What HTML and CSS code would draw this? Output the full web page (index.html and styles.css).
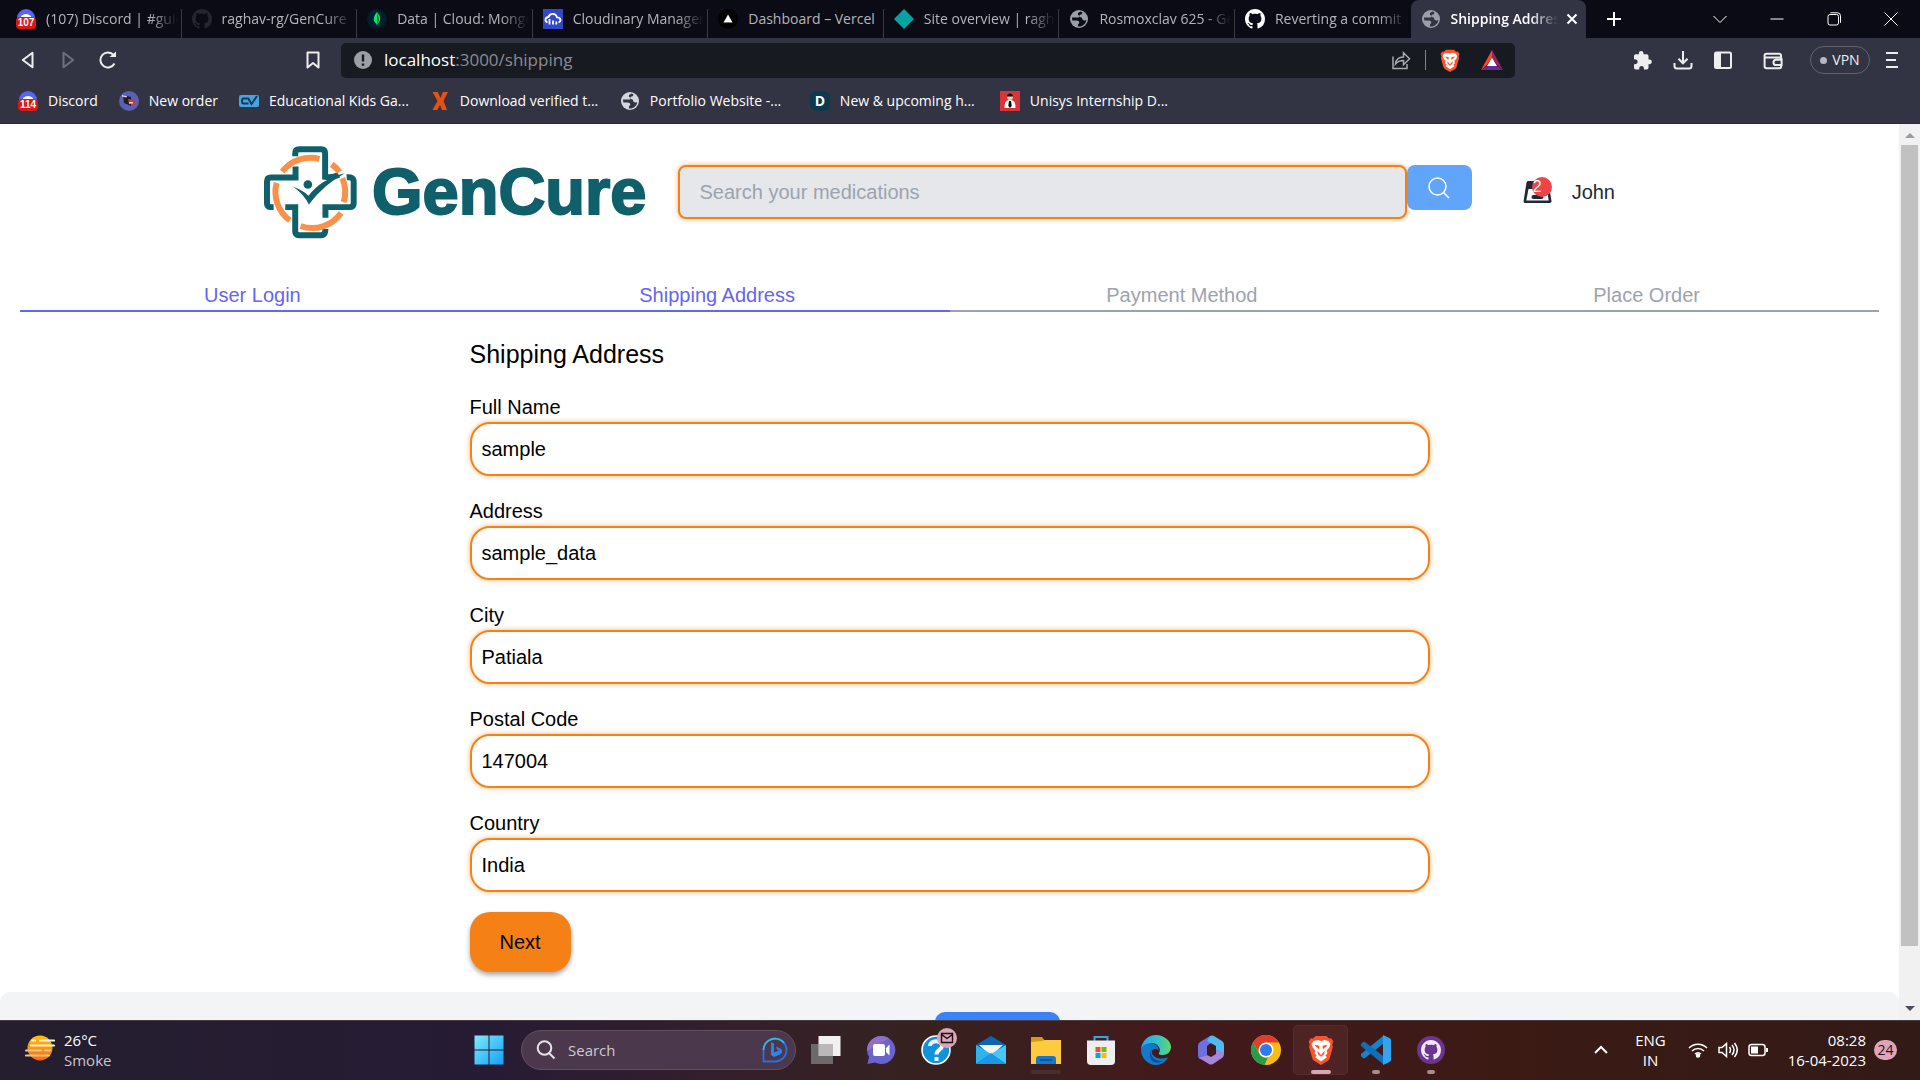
FILE: index.html
```html
<!DOCTYPE html>
<html lang="en">
<head>
<meta charset="utf-8">
<title>Shipping Address</title>
<link rel="stylesheet" href="styles.css">
</head>
<body>
<svg class="defs" aria-hidden="true">
  <symbol id="github" viewBox="0 0 16 16"><path fill="currentColor" d="M8 0C3.58 0 0 3.58 0 8c0 3.54 2.29 6.53 5.47 7.59.4.07.55-.17.55-.38 0-.19-.01-.82-.01-1.49-2.01.37-2.53-.49-2.69-.94-.09-.23-.48-.94-.82-1.13-.28-.15-.68-.52-.01-.53.63-.01 1.08.58 1.23.82.72 1.21 1.87.87 2.33.66.07-.52.28-.87.51-1.07-1.78-.2-3.64-.89-3.64-3.95 0-.87.31-1.59.82-2.15-.08-.2-.36-1.02.08-2.12 0 0 .67-.21 2.2.82.64-.18 1.32-.27 2-.27s1.36.09 2 .27c1.53-1.04 2.2-.82 2.2-.82.44 1.1.16 1.92.08 2.12.51.56.82 1.27.82 2.15 0 3.07-1.87 3.75-3.65 3.95.29.25.54.73.54 1.48 0 1.07-.01 1.93-.01 2.2 0 .21.15.46.55.38A8.01 8.01 0 0 0 16 8c0-4.42-3.58-8-8-8z"/></symbol>
  <symbol id="globe" viewBox="0 0 20 20"><circle cx="10" cy="10" r="9" fill="currentColor"/><path fill="var(--hole)" d="M11.5 2.6c-1 1-2.700 1-2.700 2.400s1.700 1 1.700 2.400-2 1.200-3.400 1.200H3c0 1.200.1 2 .4 2.800h4.100c1.600 0 2.800.9 2.800 2.200s-1.300 1-1.300 2.300v1.500c4.300.5 8-2.700 8.300-6.500-1.300 1-3.100.9-3.900-.4-.5-.9-.1-1.700-1-2-1.100-.4-2.200-.8-1.900-2s2.200-.7 2.700-1.900c.2-.6.1-1-.1-1.300z"/></symbol>
  <symbol id="brave" viewBox="0 0 24 28"><path fill="#fb542b" d="M7 1h10l2.500 2.300 2-.2 2 3-1 3 .6 2-3 10.500c-.4 1.400-1.200 2.200-2.300 3L12 28l-5.800-3.400c-1.100-.8-1.900-1.600-2.300-3L.9 11.100l.6-2-1-3 2-3 2 .2z"/><path fill="#fff" d="M12 5.500l3-.8 4 .8 1.800 3-1 3-2.500 3.200.7 2.500-2 2 1.500 1.500-5.500 4-5.500-4L8 19.200l-2-2 .7-2.500-2.500-3.200-1-3L5 5.500l4-.8z"/><path fill="#fb542b" d="M6 9l4.500 1-.2 3.200L7.200 11zM18 9l-4.500 1 .2 3.200 3.100-2.200zM8.500 15l2 1.800L12 19l1.500-2.200 2-1.800-.6 3-2.900 2.300L9.100 18z"/></symbol>
  <symbol id="discord" viewBox="0 0 20 20"><circle cx="10" cy="9" r="9" fill="#5865f2"/><path fill="#fff" d="M5 7q5-4 10 0v3H5z"/><rect y="8" width="20" height="12" rx="4" fill="#dd1717"/></symbol>
</svg>

<header class="chrome">
  <div class="tabstrip">
    <nav class="tabs" aria-label="Open tabs">
      <a class="tab" href="#"><span class="favicon badged"><svg><use href="#discord"/></svg><b>107</b></span><span class="tab-title">(107) Discord | #guides</span></a>
      <a class="tab" href="#"><svg class="favicon dark"><use href="#github"/></svg><span class="tab-title">raghav-rg/GenCure</span></a>
      <a class="tab" href="#"><svg class="favicon" viewBox="0 0 20 20"><circle cx="10" cy="10" r="10" fill="#001e2b"/><path fill="#00ed64" d="M10 3c-2 2.500-3.200 4.500-3.200 7 0 2.300 1.300 4 2.800 5l.4 2 .4-2c1.500-1 2.800-2.700 2.800-5 0-2.500-1.200-4.500-3.200-7z"/><path fill="#00684a" d="M10 4v13l.4-2c3-4 .8-8-.4-11z"/></svg><span class="tab-title">Data | Cloud: MongoDB</span></a>
      <a class="tab" href="#"><svg class="favicon" viewBox="0 0 20 20"><rect width="20" height="20" fill="#3448c5"/><path fill="none" stroke="#fff" stroke-width="1.800" d="M4.500 13.500c-3.500-1.500-2-5.500 1-5.500 1.500-4.500 7.500-4 8.500.3 4 0 4.500 4 1.500 5.200M6.500 10v5.500M10 11.500v4M13.300 12.500v3"/></svg><span class="tab-title">Cloudinary Management</span></a>
      <a class="tab" href="#"><svg class="favicon" viewBox="0 0 20 20"><circle cx="10" cy="10" r="10"/><path fill="#fff" d="M10 5.500l4.500 8h-9z"/></svg><span class="tab-title whole">Dashboard – Vercel</span></a>
      <a class="tab" href="#"><svg class="favicon" viewBox="0 0 20 20"><path fill="#06a3a3" d="M10 0l10 10-10 10L0 10z"/></svg><span class="tab-title">Site overview | raghav</span></a>
      <a class="tab" href="#"><svg class="favicon globe"><use href="#globe"/></svg><span class="tab-title">Rosmoxclav 625 - GenCure</span></a>
      <a class="tab" href="#"><svg class="favicon white"><use href="#github"/></svg><span class="tab-title">Reverting a commit in</span></a>
      <div class="tab active"><svg class="favicon globe"><use href="#globe"/></svg><span class="tab-title">Shipping Address</span><button class="tab-close" aria-label="Close tab"><svg viewBox="0 0 12 12"><path d="M1.500 1.500l9 9M10.500 1.500l-9 9"/></svg></button></div>
    </nav>
    <button class="new-tab" aria-label="New tab"><svg viewBox="0 0 16 16"><path d="M8 1v14M1 8h14"/></svg></button>
    <div class="window-buttons">
      <button aria-label="Search tabs"><svg viewBox="0 0 14 14"><path d="M.5 4L7 10.500 13.500 4"/></svg></button>
      <button aria-label="Minimize"><svg viewBox="0 0 14 14"><path d="M.5 7h13"/></svg></button>
      <button aria-label="Restore"><svg viewBox="0 0 14 14"><rect x="1" y="2.500" width="10.500" height="10.500" rx="2"/><path d="M3.500.800h7a3 3 0 0 1 3 3v7"/></svg></button>
      <button aria-label="Close"><svg viewBox="0 0 14 14"><path d="M.5.500l13 13M13.500.500l-13 13"/></svg></button>
    </div>
  </div>

  <div class="toolbar">
    <div class="nav-buttons">
      <button aria-label="Back"><svg viewBox="0 0 20 20"><path d="M14.500 2.800v14.400L4.800 10z"/></svg></button>
      <button class="disabled" aria-label="Forward" disabled><svg viewBox="0 0 20 20"><path d="M5.500 2.800v14.400l9.700-7.200z"/></svg></button>
      <button aria-label="Reload"><svg viewBox="0 0 20 20"><path d="M16.500 13.500a7.500 7.500 0 1 1-.8-8.300"/><path class="solid" d="M11.500 7h6.500V1.500z"/></svg></button>
    </div>
    <button class="bookmark-page" aria-label="Bookmark this page"><svg viewBox="0 0 20 20"><path d="M4.500 2.500h11v15L10 13l-5.500 4.500z"/></svg></button>
    <div class="address">
      <svg class="info" viewBox="0 0 18 18"><circle cx="9" cy="9" r="9" fill="#9aa0a6"/><path stroke="#181a21" stroke-width="2.400" d="M9 3.500v7M9 12.500v2.300"/></svg>
      <span class="url"><strong>localhost</strong>:3000/shipping</span>
      <div class="address-actions">
        <svg class="share" viewBox="0 0 20 20"><path d="M2 6.500V18.500h14V14M4.500 14c.5-4.500 3.500-7 8-7V2.800l6 6-6 6V10.500c-3.500 0-6 1-8 3.500z"/></svg>
        <i class="divider"></i>
        <svg class="lion"><use href="#brave"/></svg>
        <svg class="bat" viewBox="0 0 22 20"><path fill="#ff4724" d="M11 0v7L6 15l-6 5z"/><path fill="#9e1f63" d="M11 0l11 20-6-5-5-8z"/><path fill="#662d91" d="M0 20l6-4h10l6 4z"/><path fill="#fff" d="M11 7.500l5 8.500H6z"/></svg>
      </div>
    </div>
    <div class="tools">
      <button aria-label="Extensions"><svg viewBox="0 0 20 20"><path class="fill" d="M16.500 9.500H15.500V6a1.800 1.800 0 0 0-1.800-1.800H10.500V3.200a2.300 2.300 0 0 0-4.600 0v1H2.800A1.800 1.800 0 0 0 1 6v3.200h1.200a2.500 2.500 0 0 1 0 5H1v3.500A1.800 1.800 0 0 0 2.800 19.500h3.400v-1.200a2.300 2.300 0 0 1 4.700 0v1.200h2.800a1.800 1.800 0 0 0 1.800-1.800v-3.500h1a2.350 2.350 0 0 0 0-4.700z"/></svg></button>
      <button aria-label="Downloads"><svg viewBox="0 0 20 20"><path d="M10 1v12M5.500 8.800L10 13.300l4.500-4.500M1.500 13v3c0 1.500 1 2.500 2.500 2.500h12c1.500 0 2.500-1 2.500-2.500v-3"/></svg></button>
      <button aria-label="Sidebar"><svg viewBox="0 0 20 20"><rect x="2" y="2.500" width="16" height="15.500" rx="1.500"/><path class="fill" d="M2 2.500h6v15.500H2z"/></svg></button>
      <button class="wallet" aria-label="Wallet"><svg viewBox="0 0 20 20"><path d="M18 7V5.500c0-1-.8-1.700-1.800-1.700H3.300A1.600 1.600 0 0 0 1.600 5.500v10.700c0 1 .9 2 2 2h12.600c1.200 0 2-.8 2-2V15M1.600 6.300c0 .7.700 1.200 1.700 1.200h13.500a1.800 1.800 0 0 1 1.800 1.800V15h-5.500a2.600 2.600 0 0 1 0-5.200h5"/></svg></button>
      <button class="vpn"><i></i>VPN</button>
      <button class="menu" aria-label="Menu"><svg viewBox="0 0 16 20"><path d="M2 3h12M2 10h10M2 17h12"/></svg></button>
    </div>
  </div>

  <nav class="bookmarks" aria-label="Bookmarks">
    <a href="#"><span class="favicon badged"><svg><use href="#discord"/></svg><b>114</b></span>Discord</a>
    <a href="#"><svg class="favicon" viewBox="0 0 20 20"><circle cx="10" cy="10" r="10" fill="#5860b8"/><path fill="#1d1d2b" d="M4 4l8 2v9l-7-3z"/><path fill="#c43b45" d="M9 8l8 1-1 5-6-1z"/><path fill="#e8d8c8" d="M3 4l5 1-.5 1.500L3 5.500zM10 11h4v1.500h-4z"/></svg>New order</a>
    <a class="long" href="#"><svg class="favicon" viewBox="0 0 20 20"><rect y="4" width="20" height="12" rx="2" fill="#45a5e0"/><path fill="none" stroke="#123a5c" stroke-width="2" d="M9.500 7.500H4.500C2.500 7.500 2.500 12.500 4.500 12.500h5M9 7l3.500 6L18 5"/></svg>Educational Kids Ga...</a>
    <a class="long" href="#"><svg class="favicon" viewBox="0 0 20 20"><path fill="#e8500f" d="M2.500 1h5.300L10.500 7l2.300-6H18l-4.500 9L17 19h-5l-2-5-2.700 5H2.500L7.500 10z"/></svg>Download verified t...</a>
    <a class="long" href="#"><svg class="favicon globe light"><use href="#globe"/></svg>Portfolio Website -...</a>
    <a class="long" href="#"><span class="favicon letter">D</span>New &amp; upcoming h...</a>
    <a class="long" href="#"><svg class="favicon" viewBox="0 0 20 20"><rect width="20" height="20" fill="#da3438"/><path fill="#fff" d="M4.500 17c0-6 1.500-8 5.500-8s5.500 2 5.500 8z"/><circle cx="10" cy="6" r="3" fill="#f5cdb4"/><path d="M7 5.500c0-4 6-4 6 0zM9 10h2l.7 5-1.700 2-1.700-2z"/></svg>Unisys Internship D...</a>
  </nav>
</header>

<div class="viewport">
  <div class="page">
    <header class="site-header">
      <a class="logo" href="#">
        <svg viewBox="43 47 280 278" aria-hidden="true">
          <g fill="none" stroke="#10606b" stroke-width="18">
            <path d="M137 77V68Q137 56 149 56H215Q227 56 227 68V139Q250 142 268 133"/>
            <path d="M292 140Q313 138 313 154V218Q313 230 301 230H228V262"/>
            <path d="M228 296Q228 315 214 315H149Q137 315 137 303V230H107"/>
            <path d="M72 230H64Q52 230 52 218V153Q52 141 64 141H138V108"/>
          </g>
          <g fill="none" stroke="#f9914a" stroke-width="18">
            <path d="M98 123A106 106 0 0 1 210 85"/>
            <path d="M247 101A106 106 0 0 1 270 124"/>
            <path d="M279 143A106 106 0 0 1 283 215"/>
            <path d="M275 248A106 106 0 0 1 153 287"/>
            <path d="M81 157A106 106 0 0 0 121 270"/>
          </g>
          <circle cx="175" cy="162" r="13" fill="#10606b"/>
          <path fill="#10606b" d="M131 169Q158 178 177 196 215 145 287 128 225 160 178 222 163 192 131 169z"/>
        </svg>
        <span>GenCure</span>
      </a>
      <form class="search">
        <input type="text" aria-label="Search" placeholder="Search your medications">
        <button type="button" aria-label="Search"><svg viewBox="0 0 22 22"><circle cx="9.500" cy="9.500" r="8.500"/><path d="M15.500 15.500l5.500 5.500"/></svg></button>
      </form>
      <a class="cart" href="#" aria-label="Cart">
        <svg viewBox="0 0 28 24"><path fill="#1f2937" fill-rule="evenodd" d="M5 1h18c1 0 1.700.6 1.900 1.600L28 21c.2 1.200-.6 2-1.800 2H1.800C.6 23 0 22.200.1 21L3 2.600C3.200 1.600 4 1 5 1zm0 8L2.800 20.500h22.400L23.500 9z"/><rect x="8" y="15" width="12" height="4" rx="2" fill="#1f2937"/></svg>
        <span class="count">2</span>
      </a>
      <a class="user" href="#">John</a>
    </header>

    <ol class="steps">
      <li class="done">User Login</li>
      <li class="done">Shipping Address</li>
      <li>Payment Method</li>
      <li>Place Order</li>
    </ol>

    <form class="shipping">
      <h1>Shipping Address</h1>
      <div class="field"><label for="name">Full Name</label><input id="name" type="text" value="sample"></div>
      <div class="field"><label for="address">Address</label><input id="address" type="text" value="sample_data"></div>
      <div class="field"><label for="city">City</label><input id="city" type="text" value="Patiala"></div>
      <div class="field"><label for="postal">Postal Code</label><input id="postal" type="text" value="147004"></div>
      <div class="field"><label for="country">Country</label><input id="country" type="text" value="India"></div>
      <button class="next" type="button">Next</button>
    </form>

    <footer class="site-footer"><button type="button" aria-label="Back to top"></button></footer>
  </div>
  <div class="scrollbar" aria-hidden="true">
    <i class="arrow up"></i><i class="thumb"></i><i class="arrow down"></i>
  </div>
</div>

<footer class="taskbar">
  <div class="weather">
    <svg viewBox="0 0 30 26"><defs><linearGradient id="sun" x2="0" y2="1"><stop stop-color="#ffc20a"/><stop offset="1" stop-color="#f26a11"/></linearGradient></defs><circle cx="15" cy="13" r="12.500" fill="url(#sun)"/><path stroke="#fff3d6" stroke-width="2.200" stroke-linecap="round" d="M7 5.500h3M15 5.500h14M6 10.500h23"/><path stroke="#e9c294" stroke-width="2.200" stroke-linecap="round" d="M1 15.500h15M20 15.500h5M1 20.500h23"/></svg>
    <p>26°C<br><span>Smoke</span></p>
  </div>
  <nav class="apps" aria-label="Taskbar">
    <button aria-label="Start"><svg viewBox="0 0 30 30"><defs><linearGradient id="win" x2="1" y2="1"><stop stop-color="#7deaff"/><stop offset="1" stop-color="#14a0f5"/></linearGradient></defs><path fill="url(#win)" d="M.5.500h14v14H.5zM15.500.500h14v14h-14zM.5 15.500h14v14H.5zM15.500 15.500h14v14h-14z"/></svg></button>
    <div class="task-search">
      <svg class="lens" viewBox="0 0 20 20"><circle cx="8.500" cy="8" r="6.800"/><path d="M13 13l5.500 5.500"/></svg>
      <input type="text" aria-label="Search the computer" placeholder="Search">
      <svg class="bing" viewBox="0 0 26 26"><path fill="none" stroke="#2b6fe0" stroke-width="1.800" d="M1.500 24.500V13A11.500 11.500 0 1 1 13 24.500z"/><path fill="none" stroke="#36b9d8" stroke-width="1.800" d="M1.500 13A11.500 11.500 0 0 1 22 6"/><path fill="#2a84f0" d="M9 5l3 1.500v9l5-2-2-1-1-3 5 2.500c2 2 1 4.500-1 5.500L12 20l-3-2z"/></svg>
    </div>
    <button aria-label="Task view"><svg viewBox="0 0 30 30"><rect x="7.500" y="1" width="22" height="20" fill="#f1f1f1"/><rect y="9" width="22" height="20" fill="#777" opacity=".85"/><rect x="7.500" y="9" width="14.500" height="12" fill="#b9b9b9"/></svg></button>
    <button aria-label="Chat"><svg viewBox="0 0 30 30"><path fill="#6a62cf" d="M15 1a14 14 0 1 1-6 26.500L1.500 29 3 22A14 14 0 0 1 15 1z"/><path fill="#8f70c4" d="M1 16A14 14 0 0 1 15 1c3 0 6 1 8 2.500z"/><rect x="7" y="9" width="12" height="12" rx="2" fill="#fff"/><path fill="#fff" d="M20 13l3.500-3.500v11L20 17z"/></svg></button>
    <button class="notified" aria-label="Help"><svg viewBox="0 0 30 30"><circle cx="15" cy="15" r="14" fill="#0e93dc" stroke="#fff" stroke-width="1.600"/><path fill="none" stroke="#fff" stroke-width="4" d="M9 11c0-6.500 12-6.500 12 0 0 4-5.500 3.500-5.500 8.500M15.500 22v4"/></svg><svg class="mail-badge" viewBox="0 0 20 20"><circle cx="10" cy="10" r="10" fill="#dea5b9"/><path fill="none" stroke="#111" stroke-width="1.400" d="M4.500 5.500h11v9h-11zM4.500 6.500l5.500 4 5.500-4"/></svg></button>
    <button aria-label="Mail"><svg viewBox="0 0 30 30"><path fill="#0b64b5" d="M15 1l15 9v6H0v-6z"/><path fill="#f4f4f4" d="M3 10h24l-12 11z"/><path fill="#2db4ee" d="M0 10l15 9-15 10z"/><path fill="#47c8f5" d="M30 10v19L15 19z"/><path fill="#1a98e3" d="M0 29l15-11 15 11z"/></svg></button>
    <button class="open-dim" aria-label="File Explorer"><svg viewBox="0 0 30 30"><path fill="#d69a10" d="M0 2h11l3 4v4H0z"/><path fill="#ffca3e" d="M0 7l11-1 3-1h16v24H0z"/><path fill="#1677cf" d="M5 29v-5q0-3 3-3h14q3 0 3 3v5z"/><path stroke="#0d4e92" stroke-width="1.500" d="M9 25h12"/></svg></button>
    <button aria-label="Store"><svg viewBox="0 0 30 30"><path fill="none" stroke="#2da9ec" stroke-width="2" d="M8.500 6V2h13v4"/><path fill="#eee" d="M1 5.500h28V26q0 4-4 4H5q-4 0-4-4z"/><path fill="#f04f25" d="M9.500 12h5v5h-5z"/><path fill="#7fba00" d="M15.500 12h5v5h-5z"/><path fill="#00a4ef" d="M9.500 18h5v5h-5z"/><path fill="#ffb900" d="M15.500 18h5v5h-5z"/></svg></button>
    <button aria-label="Edge"><svg viewBox="0 0 30 30"><defs><linearGradient id="edge" x2="1"><stop stop-color="#2aa5e5"/><stop offset=".55" stop-color="#34c1c8"/><stop offset="1" stop-color="#5fd96b"/></linearGradient></defs><path fill="#1279c9" d="M0 15C0 7 7 6 13 9c3 1 5 4 4.500 6.500C15 12 10 14 11 18c1 5 9 7 16 4.500C25 27 20 30 15 30 7 30 0 23 0 15z"/><path fill="url(#edge)" d="M0 14C1 6 7 0 15 0s15 6 15 12c0 5-4 8-8 8-3 0-5-.5-4-2C21 13 16 8 10 8 5 8 1 11 0 14z"/><path fill="#0c4f96" d="M11 14c-3 7 3 13 11 12-9 5-17-3-11-12z"/></svg></button>
    <button aria-label="Microsoft 365"><svg viewBox="0 0 30 30"><path fill="#6f6fe0" d="M14 1L4 7q-2 1-2 4v9q0 3 2 4l7-4v-9l8-6z"/><path fill="#52b9ee" d="M14 1q2-1 4 0l8 5q2 1 2 4v9l-8-4v-4l-9-5z"/><path fill="#a685dd" d="M28 18q0 4-2 5l-9 6q-2 1-4 0L3 23l8-3 4 2 5-3v-4z"/></svg></button>
    <button aria-label="Chrome"><svg viewBox="0 0 30 30"><circle cx="15" cy="15" r="15" fill="#fbbc12"/><path fill="#e33b2e" d="M2 7.500a15 15 0 0 1 26 0H15L8.500 18z"/><path fill="#2a9b47" d="M2 7.500L8.500 18.800a7.500 7.500 0 0 0 8.500 3.500L13.500 30A15 15 0 0 1 2 7.500z"/><circle cx="15" cy="15" r="7.500" fill="#fff"/><circle cx="15" cy="15" r="6" fill="#2f7bea"/></svg></button>
    <button class="current" aria-label="Brave"><svg><use href="#brave"/></svg></button>
    <button class="open" aria-label="Visual Studio Code"><svg viewBox="0 0 30 30"><path fill="#1583cf" d="M22 1v8L4 23q-1 .6-2 0l-2-2q-.6-1 0-2z"/><path fill="#0f6fb8" d="M22 29v-8L4 7Q3 6.400 2 7L0 9q-.6 1 0 2z"/><path fill="#2fa6ef" d="M22 0l6.500 3Q30 4 30 5v20q0 1-1.500 2L22 30z"/></svg></button>
    <button class="open" aria-label="GitHub Desktop"><svg class="gh-desktop" viewBox="0 0 30 30"><circle cx="15" cy="15" r="14" fill="#6e3494"/><use href="#github" x="5" y="5" width="20" height="20"/></svg></button>
  </nav>
  <div class="tray">
    <button class="overflow" aria-label="Show hidden icons"><svg viewBox="0 0 14 14"><path d="M1 10l6-6 6 6"/></svg></button>
    <p class="lang">ENG<br>IN</p>
    <div class="status">
      <svg viewBox="0 0 20 16"><path d="M1 6a12.500 12.500 0 0 1 18 0M4 9a8.500 8.500 0 0 1 12 0M7 12a4.500 4.500 0 0 1 6 0"/><circle cx="10" cy="13.500" r="1.500" fill="#fff"/></svg>
      <svg viewBox="0 0 20 16"><path d="M1 5.500h3l4.500-4v13l-4.500-4H1zM11.500 5q2 3 0 6M14 3q4 5 0 10M16.500 1q5.500 7 0 14"/></svg>
      <svg viewBox="0 0 20 16"><rect x="1" y="2.500" width="16" height="11" rx="2.500"/><path fill="#fff" stroke="none" d="M3 4.500h7v7H3zM18 6h2v4h-2z"/></svg>
    </div>
    <p class="clock">08:28<br>16-04-2023</p>
    <span class="alerts">24</span>
  </div>
</footer>
</body>
</html>
```

FILE: styles.css
```css
* { box-sizing: border-box; }

body {
  margin: 0;
  height: 100vh;
  display: flex;
  flex-direction: column;
  overflow: hidden;
  font-family: "Liberation Sans", Arial, sans-serif;
  font-size: 20px;
  line-height: 30px;
  color: #000;
  background: #fff;
}

button, input { font: inherit; color: inherit; border: 0; padding: 0; background: none; }
a { color: inherit; text-decoration: none; }
p { margin: 0; }
.defs { display: none; }

/* Browser window */
.chrome, .taskbar { font-family: "Open Sans", "Noto Sans", sans-serif; font-size: 14px; line-height: 20px; }
.chrome { background: #323444; color: #fff; }
.chrome button { display: grid; place-items: center; }
.chrome button svg { fill: none; stroke: currentColor; }

.tabstrip { display: flex; height: 38px; background: #0b0b15; }
.tabs { flex: 1; display: flex; min-width: 0; padding-left: 6px; }
.tab { flex: 1 1 0; min-width: 0; display: flex; align-items: center; gap: 10px; padding: 0 4px 0 10px; color: #b4b5bb; position: relative; }
.tab::after { content: ""; position: absolute; right: 0; top: 9px; bottom: 0; width: 1px; background: #3a3a40; }
.tab:nth-last-child(2)::after, .tab.active::after { display: none; }
.tab.active { background: #323444; color: #fff; font-weight: 600; border-radius: 8px 8px 0 0; --hole: #323444; }
.tab-title { flex: 1; min-width: 0; overflow: hidden; white-space: nowrap; mask-image: linear-gradient(to left, transparent, #000 28px); }
.tab-title.whole { mask-image: none; }
.tab-close { width: 20px; height: 20px; margin-left: -6px; }
.tab-close svg { width: 12px; height: 12px; stroke-width: 2; }

.favicon { flex: none; width: 20px; height: 20px; --hole: #0b0b15; }
.favicon.dark { color: #25262d; }
.favicon.white { color: #fff; }
.favicon.globe { color: #9a9fa8; }
.active .favicon, .bookmarks .favicon { --hole: #323444; }
.favicon.light { color: #d5d7dc; }
.badged { position: relative; }
.badged svg { width: 20px; height: 20px; display: block; }
.badged b { position: absolute; inset: 8px 0 0; font: bold 10px/12px "Liberation Sans", sans-serif; text-align: center; color: #fff; }
.letter { border-radius: 7px; background: #0b3a4c; text-align: center; font-weight: 700; }

.new-tab { width: 55px; margin-right: 50px; }
.new-tab svg { width: 16px; height: 16px; stroke-width: 2; }
.window-buttons { display: flex; padding-right: 1px; }
.window-buttons button { width: 57px; }
.window-buttons svg { width: 14px; height: 14px; }

.toolbar { display: flex; align-items: center; height: 44px; color: #eee; }
.nav-buttons { display: flex; padding-left: 8px; }
.nav-buttons button { width: 40px; }
.nav-buttons svg, .bookmark-page svg { width: 20px; height: 20px; stroke-width: 2; stroke-linejoin: round; }
.nav-buttons .disabled { color: #6f707b; }
.nav-buttons .solid { fill: currentColor; stroke: none; }
.bookmark-page { margin-left: 165px; width: 40px; }
.address { flex: 1; display: flex; align-items: center; height: 35px; margin-left: 8px; padding: 0 12px 0 13px; background: #181a21; border-radius: 5px; font-size: 17px; color: #8b8c92; }
.info { width: 18px; height: 18px; margin-right: 12px; }
.url strong { font-weight: 400; color: #fff; }
.address-actions { display: flex; align-items: center; margin-left: auto; }
.share { width: 20px; height: 20px; fill: none; stroke: #a9aab0; stroke-width: 1.5; }
.divider { width: 1px; height: 20px; margin: 0 14px; background: #82838a; }
.lion { width: 20px; height: 23px; margin-right: 21px; }
.bat { width: 22px; height: 20px; }
.tools { display: flex; align-items: center; padding-left: 108px; padding-right: 20px; }
.tools button { width: 40px; }
.tools svg { width: 20px; height: 20px; stroke-width: 2; }
.tools .fill { fill: currentColor; stroke: none; }
.tools .wallet { margin-left: 10px; margin-right: 17px; }
.tools .vpn { display: flex; align-items: center; justify-content: center; gap: 5px; width: 60px; height: 28px; border: 1px solid #62606f; border-radius: 14px; }
.vpn i { width: 7px; height: 7px; border-radius: 50%; background: #b5b6c9; }
.tools .menu { width: 16px; margin-left: 14px; }
.tools .menu svg { width: 16px; }

.bookmarks { display: flex; gap: 21px; height: 42px; padding: 0 18px 4px; align-items: center; border-bottom: 1px solid #292b38; }
.bookmarks a { display: flex; align-items: center; gap: 10px; white-space: nowrap; }
.bookmarks .long { min-width: 169px; }

/* Page */
.viewport { flex: 1; min-height: 0; display: flex; background: #fff; }
.page { flex: 1; min-width: 0; overflow: hidden; }
.site-header { display: flex; align-items: center; height: 136px; padding: 0 284px 0 264px; color: #1f2937; }
.logo { display: flex; align-items: center; gap: 15px; font-size: 65px; font-weight: 700; line-height: 80px; color: #10606b; -webkit-text-stroke: 2px #10606b; }
.logo svg { width: 93px; height: 93px; }
.search { flex: 1; display: flex; align-items: flex-start; margin: 0 51px 0 31px; }
.search input, .field input { border: 2px solid #f58015; box-shadow: 0 0 5px rgba(245, 128, 21, .6); height: 54px; outline: 0; }
.search input { flex: 1; min-width: 0; padding: 0 20px; border-radius: 8px; background: #e5e7eb; }
.search input::placeholder { color: #9ca3af; opacity: 1; }
.search button { width: 65px; height: 45px; display: grid; place-items: center; border-radius: 8px; background: #60a5fa; }
.search button svg { width: 22px; height: 22px; fill: none; stroke: #fff; stroke-width: 1.5; }
.cart { position: relative; display: flex; width: 29px; margin-right: 20px; }
.cart svg { width: 29px; height: 24px; }
.count { position: absolute; left: 9px; top: -3px; width: 20px; height: 20px; padding-left: 1px; border-radius: 50%; background: #ef4444; color: #fff; font-size: 16px; line-height: 20px; }

.steps { display: flex; margin: 20px 20px 25px; padding: 0; list-style: none; text-align: center; color: #9ca3af; }
.steps li { flex: 1; border-bottom: 2px solid #9ca3af; }
.steps .done { color: #6366f1; border-color: #6366f1; }

.shipping { max-width: 960px; margin: 0 auto; }
.shipping h1 { margin: 0 0 20px; font-size: 25px; font-weight: 400; line-height: 35px; }
.field { display: grid; margin-bottom: 20px; }
.field input { width: 100%; padding: 0 10px; border-radius: 20px; }
.next { display: block; padding: 15px 30px; border-radius: 20px; background: #f58015; box-shadow: 0 3px 5px rgba(0, 0, 0, .35); }

.site-footer { display: flex; justify-content: center; margin-top: 20px; padding: 20px 0 20px 95px; height: 200px; border-radius: 10px 10px 0 0; background: #f3f4f6; }
.site-footer button { width: 125px; height: 50px; border-radius: 10px; background: #3b82f6; }

.scrollbar { width: 21px; display: flex; flex-direction: column; align-items: center; padding: 9px 0; background: #f1f1f1; }
.arrow { border: 5px solid transparent; }
.up { border-top: 0; border-bottom-color: #9a9aa2; }
.down { border-bottom: 0; border-top-color: #504a5c; }
.thumb { flex: 1; width: 17px; margin: 7px 0 60px; background: #c1c1c1; }

/* Desktop taskbar */
.taskbar { display: flex; align-items: center; height: 60px; padding-bottom: 2px; border-top: 1px solid #4a3b42; color: #fff; background: linear-gradient(90deg, #241e2e, #261b34 25%, #341f2c 38%, #352220 47%, #431a1c 60%, #40191a 68%, #3c1a14 78%, #321a18); }
.weather { display: flex; align-items: center; gap: 9px; width: 461px; padding-left: 25px; font-size: 15px; }
.weather svg { width: 30px; height: 26px; margin-bottom: 4px; }
.weather span { color: #c9c6cc; }
.apps { display: flex; align-items: center; }
.apps button { position: relative; width: 55px; height: 50px; display: grid; place-items: center; }
.apps button svg { width: 30px; height: 30px; }
.task-search { display: flex; align-items: center; gap: 12px; width: 275px; height: 40px; margin: 0 2px 0 5px; padding: 0 7px 0 14px; border: 1px solid #63505f; border-radius: 20px; background: #4b384d; }
.task-search input { flex: 1; min-width: 0; font-size: 15px; }
.task-search input::placeholder { color: #cfc8cf; opacity: 1; }
.lens { width: 20px; height: 20px; fill: none; stroke: #e6e2e6; stroke-width: 2; }
.bing { width: 26px; height: 26px; }
.apps .notified .mail-badge { position: absolute; right: 6px; top: 3px; width: 20px; height: 20px; }
.open::after, .open-dim::after, .current::after { content: ""; position: absolute; bottom: 1px; width: 8px; height: 4px; border-radius: 2px; background: #a08f8f; }
.open-dim::after { width: 30px; background: #44302f; }
.current::after { width: 20px; background: #dea5b9; }
.apps .current { background: #4d2324; border-radius: 5px; box-shadow: inset 0 0 0 1px #552d2e; }
.gh-desktop { color: #f0eaf4; }

.tray { display: flex; align-items: center; margin-left: auto; padding-right: 23px; text-align: center; }
.tray svg { fill: none; stroke: #fff; stroke-width: 1.5; }
.overflow { display: grid; place-items: center; }
.overflow svg { width: 14px; height: 14px; stroke-width: 2; }
.lang { margin: 0 22px 0 27px; font-size: 15px; }
.status { display: flex; gap: 10px; }
.status svg { width: 20px; height: 16px; }
.clock { margin: 0 8px 0 20px; font-size: 15px; text-align: right; }
.alerts { width: 23px; height: 20px; border-radius: 10px; background: #dea5b9; color: #201318; }
```
